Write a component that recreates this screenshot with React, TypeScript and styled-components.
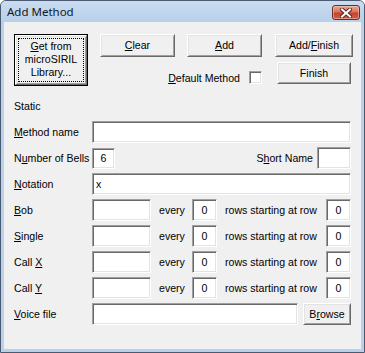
import React from "react";
import styled, { createGlobalStyle } from "styled-components";

const Global = createGlobalStyle`
  html, body { margin: 0; padding: 0; background: #ffffff; }
  * { box-sizing: border-box; }
`;

const Window = styled.div`
  width: 365px;
  height: 353px;
  border: 1px solid #4a5a70;
  border-radius: 6px 6px 0 0;
  background: #b9d1ea;
  padding-bottom: 3px;
  display: flex;
  flex-direction: column;
  font-family: "Liberation Sans", Arial, sans-serif;
  font-size: 10.6px;
  color: #000;
  overflow: hidden;
`;

const TitleBar = styled.div`
  height: 21px;
  flex: none;
  display: flex;
  align-items: flex-start;
  justify-content: space-between;
  padding: 0 4px 0 6px;
  background: linear-gradient(#cadcf1, #b8d0ea);
`;

const Title = styled.span`
  font-family: "Noto Sans", "Open Sans", sans-serif;
  font-size: 11.5px;
  line-height: 21px;
  color: #101820;
`;

const CloseBtn = styled.div`
  margin-top: 4px;
  width: 28px;
  height: 15px;
  border: 1px solid #6d2e22;
  border-radius: 3px;
  background: linear-gradient(#e9a897 0%, #d8735a 45%, #c4432a 55%, #d06048 100%);
  box-shadow: inset 0 0 0 1px rgba(255, 220, 210, 0.45);
  display: flex;
  align-items: center;
  justify-content: center;
`;

const Body = styled.div`
  flex: 1;
  margin: 0 3px;
  background: #f0f0f0;
  padding: 12px 10px 0 10px;
  display: flex;
  flex-direction: column;
`;

const TopGrid = styled.div`
  display: grid;
  grid-template-columns: 74px 75px 75px 79px;
  grid-template-rows: 23px 24px;
  column-gap: 12px;
  row-gap: 5px;
`;

const raised = `
  border: 1px solid;
  border-color: #ffffff #696969 #696969 #ffffff;
  box-shadow: inset 1px 1px #e3e3e3, inset -1px -1px #a0a0a0;
  background: #f0f0f0;
`;

const sunken = `
  border: 1px solid;
  border-color: #a0a0a0 #ffffff #ffffff #a0a0a0;
  box-shadow: inset 1px 1px #696969, inset -1px -1px #e3e3e3;
  background: #ffffff;
`;

const Button = styled.div<{ $w?: number; $h?: number; $ml?: number; $col?: number; $row?: number }>`
  ${raised}
  width: ${(p) => (p.$w ? `${p.$w}px` : "auto")};
  height: ${(p) => (p.$h ? `${p.$h}px` : "auto")};
  margin-left: ${(p) => p.$ml ?? 0}px;
  grid-column: ${(p) => p.$col ?? "auto"};
  grid-row: ${(p) => p.$row ?? "auto"};
  display: flex;
  align-items: center;
  justify-content: center;
  line-height: 13px;
  color: #000;
  text-align: center;
`;

const DefaultButton = styled.div`
  grid-row: 1 / 3;
  height: 52px;
  border: 1px solid #000;
  display: flex;
`;

const DefaultInner = styled.div`
  ${raised}
  flex: 1;
  position: relative;
  display: flex;
  align-items: center;
  justify-content: center;
  text-align: center;
  line-height: 13px;
  padding-bottom: 1px;
  &::after {
    content: "";
    position: absolute;
    inset: 2px;
    border: 1px dotted #000;
  }
`;

const U = styled.span`
  text-decoration: underline;
  text-underline-offset: 1px;
`;

const DefaultMethod = styled.div`
  grid-column: 2 / 4;
  grid-row: 2;
  justify-self: end;
  align-self: end;
  margin-bottom: 2px;
  display: flex;
  align-items: center;
  gap: 9px;
`;

const Check = styled.div`
  ${sunken}
  width: 13px;
  height: 13px;
`;

const Form = styled.div`
  margin-top: 9px;
  display: flex;
  flex-direction: column;
  gap: 4px;
`;

const Row = styled.div<{ $cols: string }>`
  display: grid;
  grid-template-columns: ${(p) => p.$cols};
  align-items: center;
  height: 22px;
`;

const Label = styled.span<{ $pl?: number; $right?: boolean }>`
  padding-left: ${(p) => p.$pl ?? 0}px;
  padding-right: ${(p) => (p.$right ? 4 : 0)}px;
  text-align: ${(p) => (p.$right ? "right" : "left")};
  white-space: nowrap;
`;

const Field = styled.div<{ $h?: number; $center?: boolean }>`
  ${sunken}
  height: ${(p) => p.$h ?? 22}px;
  display: flex;
  align-items: center;
  justify-content: ${(p) => (p.$center ? "center" : "flex-start")};
  padding: 0 3px;
`;

const CloseGlyph = () => (
  <svg width="12" height="10" viewBox="0 0 12 10">
    <path d="M2 1.5 L10 8.5 M10 1.5 L2 8.5" stroke="#5a2a22" strokeWidth="4" strokeLinecap="square" />
    <path d="M2 1.5 L10 8.5 M10 1.5 L2 8.5" stroke="#ffffff" strokeWidth="2" strokeLinecap="square" />
  </svg>
);

const callCols = "78px 59px 41px 25px 109px 25px";

const CallRow = ({ label }: { label: React.ReactNode }) => (
  <Row $cols={callCols}>
    <Label>{label}</Label>
    <Field />
    <Label $pl={8}>every</Label>
    <Field $center>0</Field>
    <Label $pl={8}>rows starting at row</Label>
    <Field $center>0</Field>
  </Row>
);

export default function App() {
  return (
    <>
      <Global />
      <Window>
        <TitleBar>
          <Title>Add Method</Title>
          <CloseBtn>
            <CloseGlyph />
          </CloseBtn>
        </TitleBar>
        <Body>
          <TopGrid>
            <DefaultButton>
              <DefaultInner>
                <span>
                  <U>G</U>et from
                  <br />
                  microSIRIL
                  <br />
                  Library...
                </span>
              </DefaultInner>
            </DefaultButton>
            <Button>
              <span>
                <U>C</U>lear
              </span>
            </Button>
            <Button>
              <span>
                <U>A</U>dd
              </span>
            </Button>
            <Button $ml={1}>
              <span>
                Add/<U>F</U>inish
              </span>
            </Button>
            <DefaultMethod>
              <span>
                <U>D</U>efault Method
              </span>
              <Check />
            </DefaultMethod>
            <Button $w={74} $h={22} $ml={3} $col={4} $row={2}>
              Finish
            </Button>
          </TopGrid>
          <Form>
            <Row $cols="1fr">
              <Label>Static</Label>
            </Row>
            <Row $cols="78px 1fr">
              <Label>
                <U>M</U>ethod name
              </Label>
              <Field />
            </Row>
            <Row $cols="78px 23px 1fr 34px">
              <Label>
                N<U>u</U>mber of Bells
              </Label>
              <Field $h={21} $center>
                6
              </Field>
              <Label $right>
                S<U>h</U>ort Name
              </Label>
              <Field />
            </Row>
            <Row $cols="78px 1fr">
              <Label>
                <U>N</U>otation
              </Label>
              <Field>x</Field>
            </Row>
            <CallRow
              label={
                <>
                  <U>B</U>ob
                </>
              }
            />
            <CallRow
              label={
                <>
                  <U>S</U>ingle
                </>
              }
            />
            <CallRow
              label={
                <>
                  Call <U>X</U>
                </>
              }
            />
            <CallRow
              label={
                <>
                  Call <U>Y</U>
                </>
              }
            />
            <Row $cols="78px 206px 1fr">
              <Label>
                <U>V</U>oice file
              </Label>
              <Field />
              <Button $h={22} $ml={5}>
                <span>
                  B<U>r</U>owse
                </span>
              </Button>
            </Row>
          </Form>
        </Body>
      </Window>
    </>
  );
}
